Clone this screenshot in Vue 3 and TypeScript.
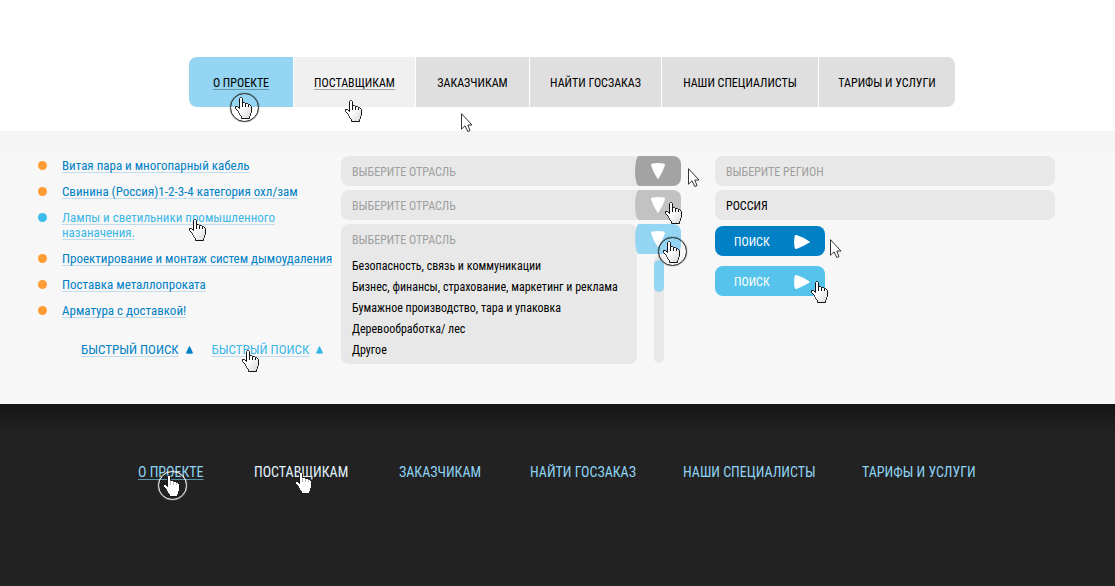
<script setup lang="ts">
import { ref } from 'vue'

interface MenuItem {
  label: string
  state?: 'active' | 'hover'
  pointer?: 'press' | 'hand' | 'arrow'
}

const menu: MenuItem[] = [
  { label: 'О ПРОЕКТЕ', state: 'active', pointer: 'press' },
  { label: 'ПОСТАВЩИКАМ', state: 'hover', pointer: 'hand' },
  { label: 'ЗАКАЗЧИКАМ', pointer: 'arrow' },
  { label: 'НАЙТИ ГОСЗАКАЗ' },
  { label: 'НАШИ СПЕЦИАЛИСТЫ' },
  { label: 'ТАРИФЫ И УСЛУГИ' },
]

const links = [
  { text: 'Витая пара и многопарный кабель' },
  { text: 'Свинина (Россия)1-2-3-4 категория охл/зам' },
  { text: 'Лампы и светильники промышленного назаначения.', hover: true },
  { text: 'Проектирование и монтаж систем дымоудаления' },
  { text: 'Поставка металлопроката' },
  { text: 'Арматура с доставкой!' },
]

const industries = [
  'Безопасность, связь и коммуникации',
  'Бизнес, финансы, страхование, маркетинг и реклама',
  'Бумажное производство, тара и упаковка',
  'Деревообработка/ лес',
  'Другое',
]

const region = ref('')
const country = ref('РОССИЯ')
</script>

<template>
  <div class="page">
    <svg class="sprite" width="0" height="0" aria-hidden="true">
      <defs>
        <linearGradient id="palm" x1="0" y1="0" x2="1" y2="1">
          <stop offset="0.45" stop-color="#fff" />
          <stop offset="1" stop-color="#d6d6d6" />
        </linearGradient>
      </defs>
      <symbol id="hand" viewBox="0 0 17 22">
        <path
          d="M5.5 .5H6.5L7.5 1.5V5.5H9.5L10.5 6.5H12.5L13.5 7.5H14.5L16.5 9.5V15.5L15.5 16.5V18.5L14.5 19.5V21.5H6.5V19.5L4.5 17.5V16.5L3.5 15.5V14.5L.5 11.5V9.5H2.5L4.5 11.5V1.5Z"
          fill="url(#palm)" stroke="#111"
        />
        <path d="M7.5 5.5V10M10.5 6.5V10M13.5 7.5V10" fill="none" stroke="#111" />
      </symbol>
      <symbol id="hand-light" viewBox="0 0 17 22">
        <path
          d="M5.5 .5H6.5L7.5 1.5V5.5H9.5L10.5 6.5H12.5L13.5 7.5H14.5L16.5 9.5V15.5L15.5 16.5V18.5L14.5 19.5V21.5H6.5V19.5L4.5 17.5V16.5L3.5 15.5V14.5L.5 11.5V9.5H2.5L4.5 11.5V1.5Z"
          fill="#fff" stroke="#1a1a1a"
        />
        <path d="M7.5 6.5V10M10.5 7.5V10M13.5 8.5V10" fill="none" stroke="#b4b4b4" />
      </symbol>
      <symbol id="arrow" viewBox="0 0 12 20">
        <path d="M.5 .7V16.2L4 12.8L6.8 18.5L9 17.7L6.8 12H11Z" fill="#fff" stroke="#333" />
      </symbol>
      <symbol id="wedge" viewBox="0 0 14 16">
        <path d="M.1 2.4Q-.2 .9 1.4 .6Q7 -.4 12.6 .6Q14.2 .9 13.9 2.4Q12 8.5 7.6 15.5Q7 16.2 6.4 15.5Q2 8.5 .1 2.4Z" fill="currentColor" />
      </symbol>
    </svg>

    <header class="top">
      <nav class="menu" aria-label="Главное меню">
        <div v-for="item in menu" :key="item.label" class="cell" :class="item.state">
          <a href="#">{{ item.label }}</a>
          <span v-if="item.pointer === 'press'" class="ring"><svg class="hand"><use href="#hand" /></svg></span>
          <svg v-else-if="item.pointer === 'hand'" class="hand"><use href="#hand" /></svg>
          <svg v-else-if="item.pointer === 'arrow'" class="arrow"><use href="#arrow" /></svg>
        </div>
      </nav>
    </header>

    <main class="content">
      <section class="topics">
        <ul>
          <li v-for="link in links" :key="link.text" :class="{ hover: link.hover }">
            <a href="#">{{ link.text }}</a>
            <svg v-if="link.hover" class="hand"><use href="#hand" /></svg>
          </li>
        </ul>
        <div class="quick">
          <span><a href="#">БЫСТРЫЙ ПОИСК</a><svg class="up" viewBox="0 0 7 8"><path d="M2.9 .7Q3.5 -.3 4.1 .7L6.8 6.6Q7 7.5 6.2 7.6Q3.5 8 .8 7.6Q0 7.5 .2 6.6Z" fill="currentColor" /></svg></span>
          <span class="hover"><a href="#">БЫСТРЫЙ ПОИСК</a><svg class="up" viewBox="0 0 7 8"><path d="M2.9 .7Q3.5 -.3 4.1 .7L6.8 6.6Q7 7.5 6.2 7.6Q3.5 8 .8 7.6Q0 7.5 .2 6.6Z" fill="currentColor" /></svg>
            <svg class="hand"><use href="#hand" /></svg></span>
        </div>
      </section>

      <section class="stack">
        <div class="drop">
          <select aria-label="Отрасль"><option>ВЫБЕРИТЕ ОТРАСЛЬ</option></select>
          <span class="toggle"><svg class="wedge"><use href="#wedge" /></svg></span>
          <svg class="arrow"><use href="#arrow" /></svg>
        </div>
        <div class="drop lit">
          <select aria-label="Отрасль"><option>ВЫБЕРИТЕ ОТРАСЛЬ</option></select>
          <span class="toggle"><svg class="wedge"><use href="#wedge" /></svg></span>
          <svg class="hand"><use href="#hand" /></svg>
        </div>
        <div class="open">
          <div class="panel">
            <button type="button" class="current" aria-expanded="true">ВЫБЕРИТЕ ОТРАСЛЬ</button>
            <ul role="listbox" aria-label="Отрасль">
              <li v-for="name in industries" :key="name" role="option">{{ name }}</li>
            </ul>
          </div>
          <div class="side">
            <span class="toggle"><svg class="wedge"><use href="#wedge" /></svg></span>
            <div class="track"><div class="thumb"></div></div>
          </div>
          <span class="ring"><svg class="hand"><use href="#hand" /></svg></span>
        </div>
      </section>

      <form class="stack" @submit.prevent>
        <input v-model="region" type="text" aria-label="Регион" placeholder="ВЫБЕРИТЕ РЕГИОН">
        <input v-model="country" type="text" aria-label="Страна">
        <div class="actions">
          <div class="action">
            <button type="submit" class="find">ПОИСК<svg class="wedge"><use href="#wedge" /></svg></button>
            <svg class="arrow"><use href="#arrow" /></svg>
          </div>
          <div class="action lit">
            <button type="submit" class="find">ПОИСК<svg class="wedge"><use href="#wedge" /></svg></button>
            <svg class="hand"><use href="#hand" /></svg>
          </div>
        </div>
      </form>
    </main>

    <footer class="bottom">
      <nav aria-label="Нижнее меню">
        <div v-for="item in menu" :key="item.label" class="foot" :class="item.state">
          <a href="#">{{ item.label }}</a>
          <span v-if="item.state === 'active'" class="ring"><svg class="hand"><use href="#hand-light" /></svg></span>
          <svg v-else-if="item.state === 'hover'" class="hand"><use href="#hand-light" /></svg>
        </div>
      </nav>
    </footer>
  </div>
</template>

<style>
body {
  margin: 0;
}
</style>

<style scoped>
.page {
  display: flex;
  flex-direction: column;
  min-height: 100vh;
  background: #fff;
  color: #000;
  font: 12px/15px "Roboto Condensed", "Open Sans Condensed", Roboto, sans-serif;
}
.page *,
.page {
  box-sizing: border-box;
}
.sprite {
  position: absolute;
}
ul {
  list-style: none;
  margin: 0;
  padding: 0;
}
a {
  color: inherit;
  text-decoration: none;
}
button,
input,
select {
  font: inherit;
  border: 0;
  margin: 0;
}
.hand {
  position: absolute;
  width: 17px;
  height: 22px;
  pointer-events: none;
}
.arrow {
  position: absolute;
  width: 12px;
  height: 20px;
  pointer-events: none;
}
.ring {
  position: absolute;
  width: 29px;
  height: 29px;
  border: 1px solid #222;
  border-radius: 50%;
  box-shadow: 0 0 1px #222;
  pointer-events: none;
}
.ring .hand {
  left: 4px;
  top: 3px;
}

.top {
  padding: 57px 160px 24px 189px;
}
.menu {
  display: grid;
  grid-template-columns: 104fr 121fr 113fr 131fr 156fr 136fr;
  gap: 1px;
}
.cell {
  position: relative;
  display: flex;
  align-items: center;
  justify-content: center;
  height: 50px;
  padding-top: 2px;
  background: #dfdfdf;
  white-space: nowrap;
}
.cell:first-child {
  border-radius: 8px 0 0 8px;
}
.cell:last-child {
  border-radius: 0 8px 8px 0;
}
.cell.active {
  background: #93d5f2;
}
.cell.hover {
  background: #f0f0f0;
}
.cell.active a,
.cell.hover a {
  text-decoration: underline;
  text-decoration-color: rgba(0, 0, 0, 0.3);
  text-decoration-skip-ink: none;
  text-underline-offset: 2px;
}
.cell .ring {
  left: 41px;
  top: 36px;
}
.cell > .hand {
  left: 51px;
  top: 43px;
}
.cell > .arrow {
  left: 45px;
  top: 56px;
}

.content {
  display: grid;
  grid-template-columns: 303px 340px 340px;
  column-gap: 0;
  padding: 25px 38px 40px;
  background: linear-gradient(#f4f4f4, #f7f7f7 26px);
}
.content > form {
  margin-left: 34px;
  width: 340px;
}
.topics {
  padding-top: 2px;
  color: #0081c6;
  font-size: 13px;
}
.topics ul {
  display: grid;
  gap: 11px;
  width: 300px;
}
.topics li {
  position: relative;
  padding-left: 24px;
}
.topics li.hover {
  padding-right: 50px;
}
.topics li::before {
  content: "";
  position: absolute;
  left: 0;
  top: 3px;
  width: 9px;
  height: 9px;
  border-radius: 50%;
  background: #ff9c33;
}
.topics li.hover::before {
  background: #3cbcec;
}
.topics .hover {
  color: #3cb8e8;
}
.topics a {
  text-decoration: underline;
  text-decoration-color: #c3dced;
  text-decoration-skip-ink: none;
  text-underline-offset: 2px;
}
.topics li .hand {
  left: 151px;
  top: 9px;
}
.quick {
  display: flex;
  gap: 19px;
  padding: 24px 0 0 43px;
}
.quick span {
  position: relative;
  display: flex;
  align-items: center;
  gap: 7px;
  white-space: nowrap;
}
.quick .hand {
  left: 30px;
  top: 8px;
}
.up {
  width: 7px;
  height: 8px;
}

.stack {
  display: flex;
  flex-direction: column;
  gap: 4px;
}
.drop {
  position: relative;
}
select,
input {
  display: block;
  width: 100%;
  height: 30px;
  padding: 1px 11px 0;
  border-radius: 8px;
  background: #e8e8e8;
  color: #000;
  appearance: none;
  outline: none;
}
select {
  padding-top: 2px;
  color: #9f9f9f;
}
input::placeholder {
  color: #9f9f9f;
  opacity: 1;
}
.toggle {
  display: flex;
  align-items: center;
  justify-content: center;
  width: 46px;
  height: 30px;
  border-radius: 4px 8px 8px 4px / 15px 8px 8px 15px;
  background: #a3a3a3;
  color: #fff;
  pointer-events: none;
}
.drop .toggle {
  position: absolute;
  right: 0;
  top: 0;
}
.lit .toggle {
  background: #c2c2c2;
}
.wedge {
  width: 14px;
  height: 16px;
}
.drop .arrow {
  left: 347px;
  top: 12px;
}
.drop .hand {
  left: 324px;
  top: 12px;
}
.open {
  position: relative;
  display: flex;
}
.panel {
  width: 296px;
  padding-bottom: 3px;
  border-radius: 8px;
  background: #e8e8e8;
}
.current {
  display: block;
  width: 100%;
  height: 32px;
  padding: 0 11px;
  background: none;
  color: #9f9f9f;
  text-align: left;
}
.panel li {
  padding-left: 11px;
  line-height: 21px;
  white-space: nowrap;
}
.side {
  display: flex;
  flex-direction: column;
  margin-left: -2px;
}
.side .toggle {
  background: #93d5f2;
}
.track {
  flex: 1;
  width: 10px;
  margin: 2px 0 1px 19px;
  padding-top: 4px;
  border-radius: 5px;
  background: #e8e8e8;
}
.thumb {
  height: 32px;
  border-radius: 5px;
  background: #93d5f2;
}
.open .ring {
  left: 317px;
  top: 13px;
}
.actions {
  display: flex;
  flex-direction: column;
  align-items: flex-start;
  gap: 10px;
  padding-top: 2px;
}
.action {
  position: relative;
}
.find {
  display: flex;
  align-items: center;
  justify-content: space-between;
  width: 110px;
  height: 30px;
  padding: 2px 16px 0 19px;
  border-radius: 8px;
  background: #0081c6;
  color: #fff;
}
.find .wedge {
  transform: rotate(-90deg);
}
.lit .find {
  background: #55c3eb;
}
.action > .arrow {
  left: 115px;
  top: 13px;
}
.action > .hand {
  left: 96px;
  top: 15px;
}

.bottom {
  flex: 1;
  padding: 59px 138px;
  background: linear-gradient(#141414, #222 28px);
  color: #8fd4f3;
  font-size: 14px;
  line-height: 18px;
}
.bottom nav {
  display: grid;
  grid-template-columns: 116fr 145fr 131fr 153fr 179fr 115fr;
}
.foot {
  position: relative;
  white-space: nowrap;
}
.foot.hover {
  color: #e2f4fd;
}
.foot.active a {
  text-decoration: underline;
  text-decoration-color: #5a93aa;
  text-decoration-skip-ink: none;
  text-underline-offset: 2px;
}
.foot .ring {
  left: 20px;
  top: 8px;
  border-color: #fff;
  box-shadow: 0 0 1px #fff;
}
.foot > .hand {
  left: 41px;
  top: 9px;
}
</style>
